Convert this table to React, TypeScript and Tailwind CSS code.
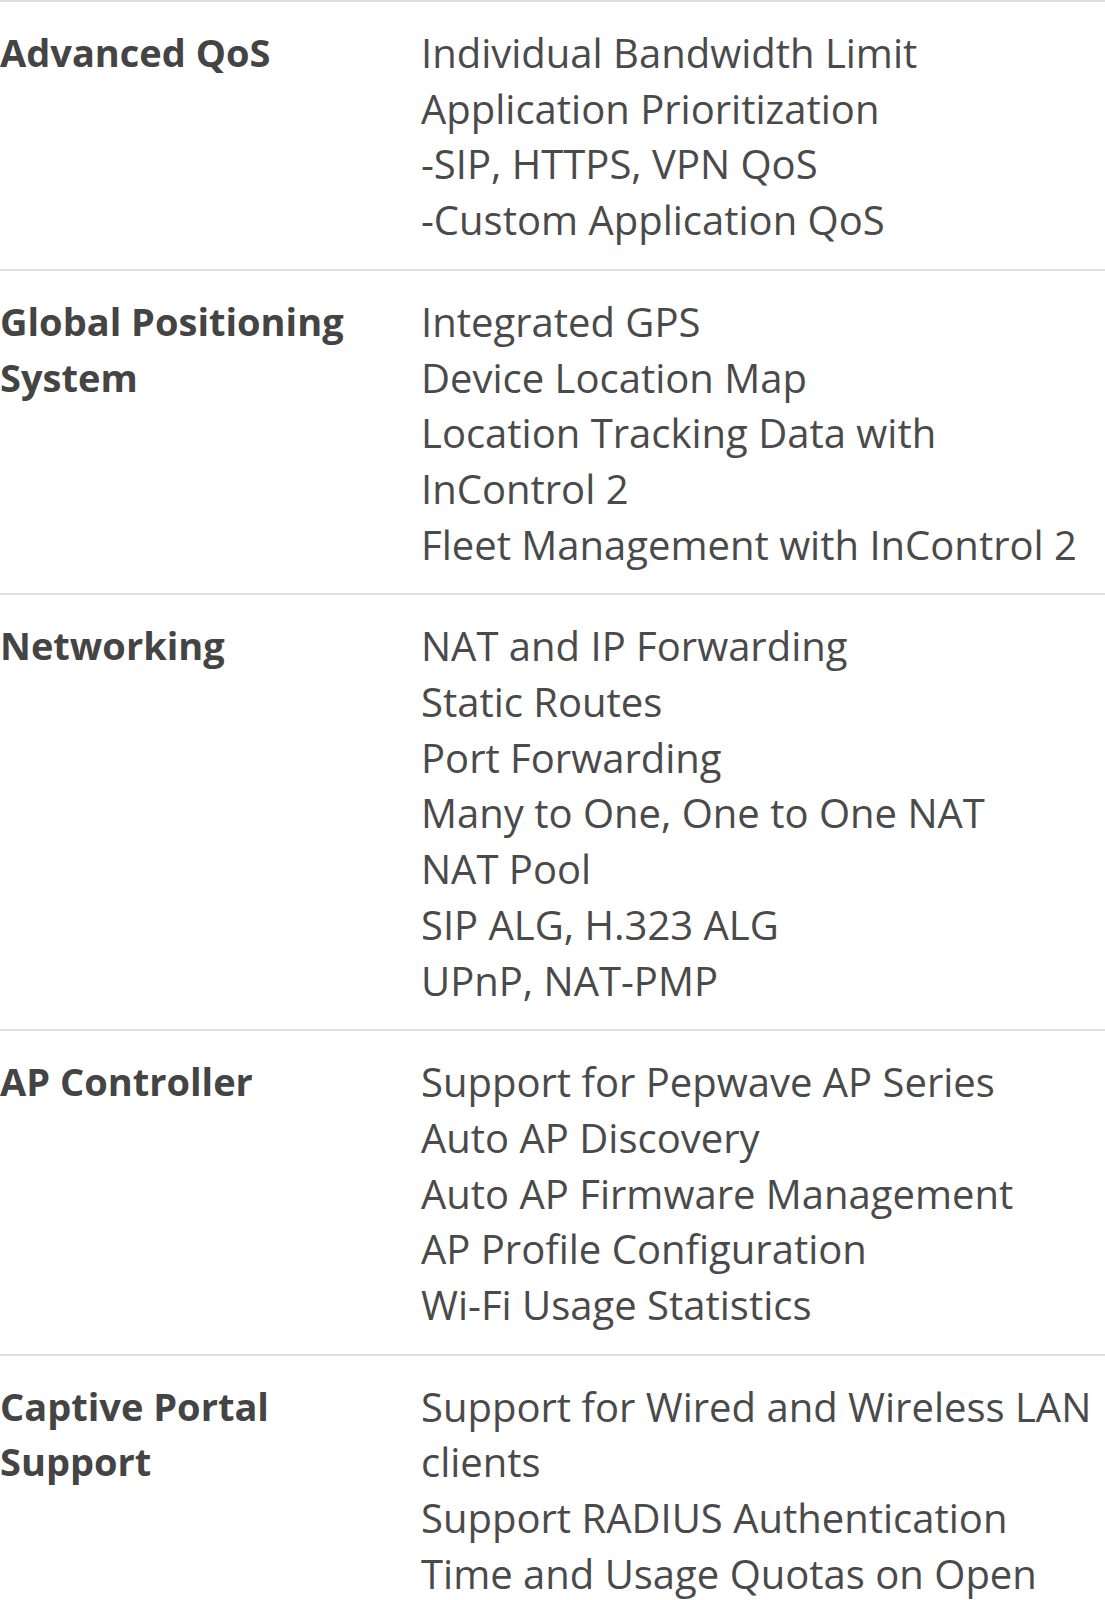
const rows: { label: string[]; items: string[] }[] = [
  {
    label: ["Advanced QoS"],
    items: [
      "Individual Bandwidth Limit",
      "Application Prioritization",
      "-SIP, HTTPS, VPN QoS",
      "-Custom Application QoS",
    ],
  },
  {
    label: ["Global Positioning", "System"],
    items: [
      "Integrated GPS",
      "Device Location Map",
      "Location Tracking Data with",
      "InControl 2",
      "Fleet Management with InControl 2",
    ],
  },
  {
    label: ["Networking"],
    items: [
      "NAT and IP Forwarding",
      "Static Routes",
      "Port Forwarding",
      "Many to One, One to One NAT",
      "NAT Pool",
      "SIP ALG, H.323 ALG",
      "UPnP, NAT-PMP",
    ],
  },
  {
    label: ["AP Controller"],
    items: [
      "Support for Pepwave AP Series",
      "Auto AP Discovery",
      "Auto AP Firmware Management",
      "AP Profile Configuration",
      "Wi-Fi Usage Statistics",
    ],
  },
  {
    label: ["Captive Portal", "Support"],
    items: [
      "Support for Wired and Wireless LAN",
      "clients",
      "Support RADIUS Authentication",
      "Time and Usage Quotas on Open",
      "Access",
      "Customizable Splash Page",
    ],
  },
];

export default function App() {
  return (
    <div className="min-h-screen w-[1105px] bg-white font-['Open_Sans',sans-serif] leading-[55.7px]">
      <div className="border-t-2 border-[#dedede]">
        {rows.map((row) => (
          <div
            key={row.label.join(" ")}
            className="flex border-b-2 border-[#dedede] pt-[23px] pb-[21px]"
          >
            <div className="w-[421px] shrink-0 whitespace-nowrap text-[38px] font-bold text-[#444444]">
              {row.label.map((l) => (
                <div key={l}>{l}</div>
              ))}
            </div>
            <div className="flex-1 whitespace-nowrap text-[40px] text-[#4a4a4a]">
              {row.items.map((item) => (
                <div key={item}>{item}</div>
              ))}
            </div>
          </div>
        ))}
      </div>
    </div>
  );
}
